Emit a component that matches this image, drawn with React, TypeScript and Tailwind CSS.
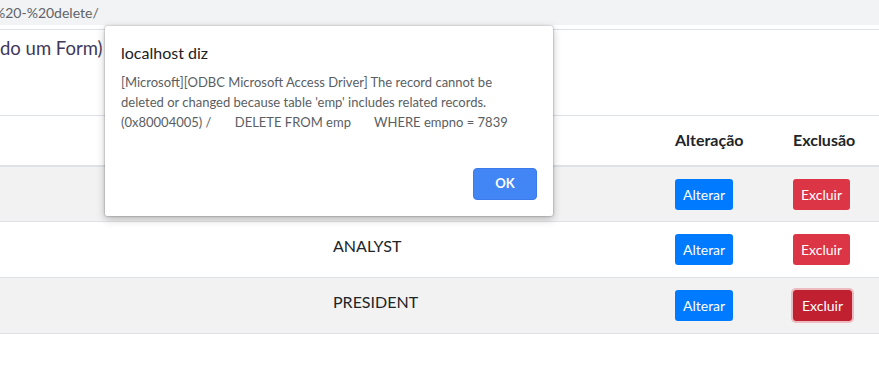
import React from "react";

const rows = [
  { job: "CLERK", bg: "bg-[#f2f2f2]", active: false },
  { job: "ANALYST", bg: "bg-white", active: false },
  { job: "PRESIDENT", bg: "bg-[#f2f2f2]", active: true },
];

export default function App() {
  return (
    <div className="relative w-[879px] h-[373px] overflow-hidden bg-white font-['Lato','Liberation_Sans',sans-serif] text-[#212529]">
      {/* address bar strip */}
      <div className="h-[25px] bg-[#f1f3f4] flex items-center overflow-hidden">
        <span className="ml-[-6px] text-[14px] text-[#5f6368] whitespace-nowrap leading-none">%20-%20delete/</span>
      </div>
      <div className="h-[4px]" />
      <div className="border-t border-[#dee2e6]" />
      {/* title */}
      <div className="h-[85px]">
        <div className="pt-[6px] text-[18.5px] leading-[24px] text-[#41385a] whitespace-nowrap">do um Form)</div>
      </div>
      {/* table */}
      <table className="table-fixed border-collapse w-[980px] text-[16px]">
        <colgroup>
          <col className="w-[321px]" />
          <col className="w-[342px]" />
          <col className="w-[118px]" />
          <col className="w-[199px]" />
        </colgroup>
        <thead>
          <tr className="h-[50px] border-t border-[#dee2e6] border-b-2 border-b-[#dee2e6]">
            <th className="px-[12px] text-left font-bold leading-[24px]"></th>
            <th className="px-[12px] text-left font-bold leading-[24px]"></th>
            <th className="px-[12px] text-left font-bold leading-[24px]">Alteração</th>
            <th className="px-[12px] text-left font-bold leading-[24px]">Exclusão</th>
          </tr>
        </thead>
        <tbody>
          {rows.map((r, i) => (
            <tr key={i} className={`${r.bg} h-[56px] border-b border-[#dee2e6]`}>
              <td className="px-[12px] pt-[12px] align-top"></td>
              <td className="px-[12px] pt-[12px] align-top leading-[24px]">{r.job}</td>
              <td className="px-[12px] pt-[12px] align-top">
                <button className="h-[31px] px-[8px] rounded-[3px] bg-[#007bff] text-white text-[14px] leading-[21px]">
                  Alterar
                </button>
              </td>
              <td className="px-[12px] pt-[12px] align-top">
                {r.active ? (
                  <button className="h-[31px] px-[8px] rounded-[3px] bg-[#c02030] border border-[#bd2130] text-white text-[14px] leading-[21px] shadow-[0_0_0_2px_rgba(225,83,97,0.35)]">
                    Excluir
                  </button>
                ) : (
                  <button className="h-[31px] px-[8px] rounded-[3px] bg-[#dc3545] text-white text-[14px] leading-[21px]">
                    Excluir
                  </button>
                )}
              </td>
            </tr>
          ))}
        </tbody>
      </table>

      {/* alert dialog */}
      <div className="absolute left-[105px] top-[26px] w-[448px] h-[190px] bg-white rounded-[2px] shadow-[0_0_2px_rgba(0,0,0,0.45),0_3px_8px_rgba(0,0,0,0.25)] px-[16px] pt-[17px] pb-[16px] flex flex-col">
        <div className="text-[16px] leading-[20px] text-[#202124]">localhost diz</div>
        <div className="mt-[9px] text-[13px] leading-[20px] text-[#5a5e63] whitespace-pre-wrap">
          {"[Microsoft][ODBC Microsoft Access Driver] The record cannot be\ndeleted or changed because table 'emp' includes related records.\n(0x80004005) /       DELETE FROM emp       WHERE empno = 7839"}
        </div>
        <div className="mt-auto flex justify-end">
          <button className="w-[64px] h-[32px] rounded-[4px] bg-[#4285f4] border border-[#3b7ae8] text-white text-[13px] font-bold">
            OK
          </button>
        </div>
      </div>
    </div>
  );
}
